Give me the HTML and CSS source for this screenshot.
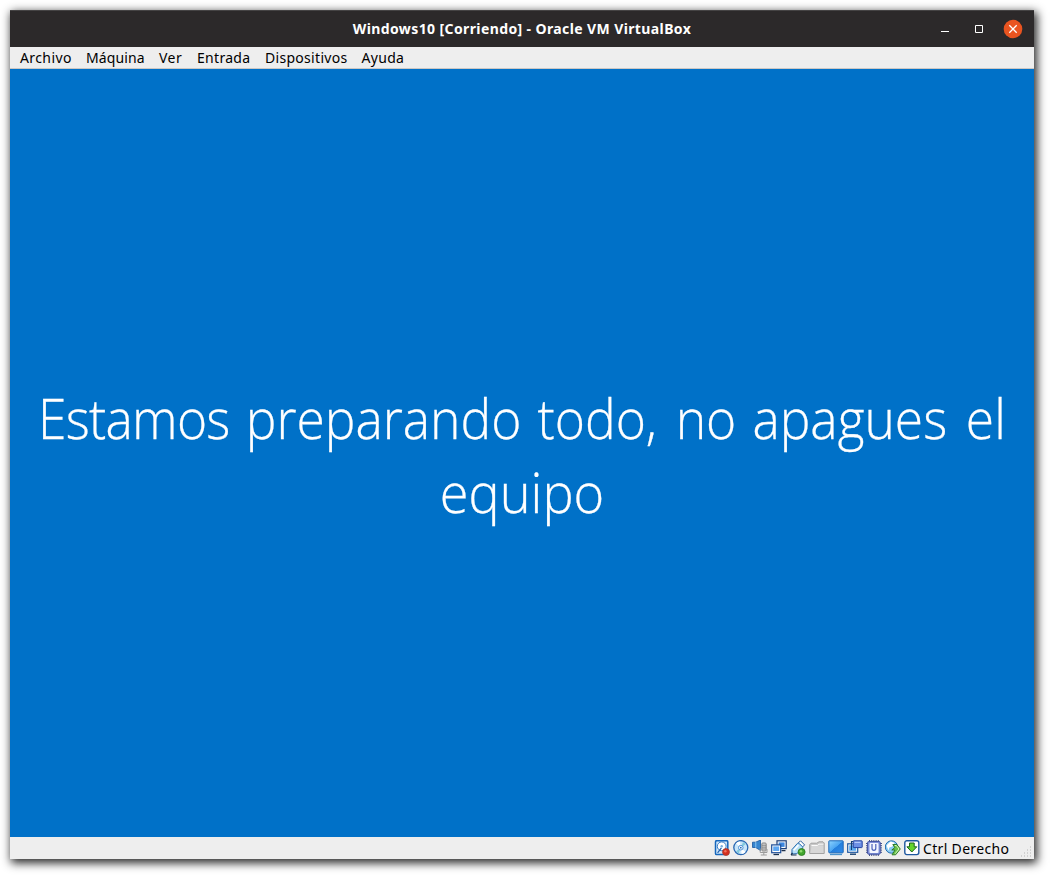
FILE: index.html
```html
<!DOCTYPE html>
<html lang="es">
<head>
<meta charset="utf-8">
<title>Windows10 [Corriendo] - Oracle VM VirtualBox</title>
<link rel="stylesheet" href="styles.css">
</head>
<body>
<div class="window">
  <header class="titlebar">
    <h1 class="title">Windows10 [Corriendo] - Oracle VM VirtualBox</h1>
    <div class="controls">
      <svg class="control" viewBox="0 0 20 20"><path d="M6 12.5h8" stroke="#fff"/></svg>
      <svg class="control" viewBox="0 0 20 20"><path d="M6.5 6.5h7v7h-7z" fill="none" stroke="#fff"/></svg>
      <svg class="control" viewBox="0 0 20 20"><circle cx="10" cy="10" r="9.3" fill="#e95420"/><path d="M6.3 6.3l7.4 7.4M13.7 6.3l-7.4 7.4" stroke="#fff" stroke-width="1.3"/></svg>
    </div>
  </header>
  <nav class="menubar">
    <span class="m-archivo">Archivo</span><span class="m-maquina">Máquina</span><span class="m-ver">Ver</span><span class="m-entrada">Entrada</span><span class="m-dispositivos">Dispositivos</span><span class="m-ayuda">Ayuda</span>
  </nav>
  <main class="screen">
    <p class="message"><span class="line-one"><span class="tight">Estamos</span> preparando todo, <span class="loose">no</span> apagues <span class="loose">el</span></span><span class="line-two">equipo</span></p>
  </main>
  <footer class="statusbar">
    <div class="icons">
      <!-- hard disk -->
      <svg viewBox="0 0 16 16"><rect x="1.5" y=".7" width="12.3" height="13.9" rx="1.2" fill="#cfe6fa" stroke="#1667bd" stroke-width="1.5"/><circle cx="7.7" cy="6.3" r="4.4" fill="#fff" stroke="#3a7cc4"/><circle cx="7.7" cy="6.3" r="1.2" fill="#77aee0"/><path d="M3.6 12.8l3.8-5" stroke="#1f5fae" stroke-width="1.2"/><circle cx="12" cy="12" r="3.5" fill="#d42f1f" stroke="#a0392d" stroke-width=".7"/><circle cx="11.4" cy="11.2" r="1.2" fill="#f0705c"/></svg>
      <!-- optical disc -->
      <svg viewBox="0 0 16 16"><circle cx="7.8" cy="7.6" r="7" fill="#c9e6fa" stroke="#2766b2" stroke-width="1.3"/><path d="M7.8 7.8L3.1 3.5A6.3 6.3 0 0 1 7 1.6zM7.8 7.8l4.8 4.1a6.3 6.3 0 0 1-4 2.1z" fill="#fff"/><path d="M8 7.8L10 2l2.8 2zM7.6 7.8L5.8 13.5 3 11.5z" fill="#81c9dc"/><circle cx="7.8" cy="7.7" r="2.3" fill="#fff" stroke="#4e91d6"/><circle cx="7.8" cy="7.7" r=".9" fill="#246ab8"/></svg>
      <!-- audio -->
      <svg viewBox="0 0 16 16"><path d="M.5 2.2h3.2L8.5 0v10.5L3.7 7.5H.5z" fill="#3685cf" stroke="#18579f" stroke-width=".8"/><path d="M3.8 2v5.7" stroke="#8bc5f2"/><rect x="9.8" y="3" width="4.4" height="8" rx="1" fill="#d0d0d0" stroke="#858585"/><path d="M10 5.3h4M10 7.2h4M10 9h4" stroke="#777" stroke-width=".7"/><path d="M8.2 8.5v4H15V9M11.8 12.5V15M8.8 15h6" fill="none" stroke="#9b9b9b"/></svg>
      <!-- network -->
      <svg viewBox="0 0 16 16"><rect x="6" y=".8" width="9.2" height="7.8" fill="#fff" stroke="#1d3e78" stroke-width="1.2"/><path d="M7.6 2.4h6v4.5h-6z" fill="#3d86de"/><path d="M10.5 10.6h4" stroke="#1d2e48" stroke-width="1.3"/><rect x=".7" y="4.9" width="9" height="7.8" fill="#fff" stroke="#1d4e98" stroke-width="1.2"/><path d="M2.2 6.4h6V11h-6z" fill="#5ea7f2"/><path d="M2.5 14.5h5.5" stroke="#17304f" stroke-width="1.3"/></svg>
      <!-- usb -->
      <svg viewBox="0 0 16 16"><path d="M10.5.8l4.1 4.1-2.2 2.2-4.1-4.1z" fill="#fff" stroke="#295f9f"/><path d="M2 9.5L7.3 3.5q1-.9 2 .1l3 3q.8 1 0 2l-5.4 5-5 .4z" fill="#b9e0f8" stroke="#2b6fb0"/><path d="M3.7 10.3l4.7-5" stroke="#fff" stroke-width="1.6"/><path d="M1 14.8l1.5-2M1 15h5.5" stroke="#17314e" stroke-width="1.2"/><circle cx="11.6" cy="12" r="3.5" fill="#42a52e" stroke="#24771b" stroke-width=".8"/><circle cx="11" cy="11.2" r="1.3" fill="#91db70"/></svg>
      <!-- shared folders -->
      <svg viewBox="0 0 16 16"><path d="M.7 13.5V4.5L2 3.2h5.8L10 1.8h4l1.2 1.2v10.5z" fill="#c9c9c9" stroke="#a3a3a3"/><path d="M1.4 13l1.2-7.4h11.8V13z" fill="#d7d7d7"/><path d="M2.5 5.5h6L10 4.2h4.5" fill="none" stroke="#fafafa"/></svg>
      <!-- display -->
      <svg viewBox="0 0 16 16"><defs><linearGradient id="display" x1="0" y1="0" x2="1" y2="1"><stop stop-color="#8fd5ff"/><stop offset=".5" stop-color="#4aa5f2"/><stop offset=".52" stop-color="#247fdc"/><stop offset="1" stop-color="#308bea"/></linearGradient></defs><rect x=".8" y=".8" width="14.4" height="12" rx=".6" fill="url(#display)" stroke="#1f68b8"/><path d="M2 14.4h12" stroke="#4c93cc" stroke-width="1.5"/></svg>
      <!-- recording -->
      <svg viewBox="0 0 16 16"><rect x=".7" y="3.8" width="10" height="8.5" fill="#fff" stroke="#1e579f" stroke-width="1.2"/><path d="M2.2 5.3h7v5.5h-7z" fill="#5cacf2"/><path d="M3 14.2h6" stroke="#153f70" stroke-width="1.4"/><path d="M4.5 1v9M4.5 1.5h2" stroke="#153f70" stroke-width="1.1"/><rect x="6.2" y=".8" width="9" height="6.8" rx=".6" fill="#6d90e5" stroke="#2443a0"/><path d="M7.5 2.3h6" stroke="#c6d8ff"/></svg>
      <!-- processor -->
      <svg viewBox="0 0 16 16"><path d="M3.5 0v16M5.7 0v16M7.9 0v16M10.1 0v16M12.3 0v16M0 3.5h16M0 5.7h16M0 7.9h16M0 10.1h16M0 12.3h16" stroke="#303e77" stroke-width=".9"/><rect x="1.6" y="1.6" width="12.6" height="12.6" rx="1" fill="#8798df" stroke="#3f50a1"/><rect x="3.5" y="3" width="9" height="10" rx="1" fill="#f3f6ff"/><path d="M6 4v4.3q0 2 1.9 2t1.9-2V4" fill="none" stroke="#4b62ba" stroke-width="1.2"/></svg>
      <!-- mouse integration -->
      <svg viewBox="0 0 16 16"><circle cx="6.5" cy="7" r="6.2" fill="#8bccf4" stroke="#226baf"/><path d="M1.5 5.5l4-4 4 1.2-2.2 3.8-3 1-.8 3z" fill="#fff"/><path d="M7.8 4.5h4l3.5 4.5-4.7 5.8H7l3-4.8H6.8l3-2.5z" fill="#69c14a" stroke="#26761f" stroke-width=".9" stroke-linejoin="round"/><path d="M9.8 5.5h1.5L14 9l-3.8 4.7" fill="none" stroke="#d5f8bf"/></svg>
      <!-- host key -->
      <svg viewBox="0 0 16 16"><rect x=".8" y=".8" width="14" height="13.8" rx="2" fill="#fff" stroke="#1e579f" stroke-width="1.4"/><path d="M5.5 3h4.7v3.8h2.6L7.8 12 2.9 6.8h2.6z" fill="#65d42c" stroke="#1d661b"/></svg>
    </div>
    <span class="host-key">Ctrl Derecho</span>
    <svg class="grip" viewBox="0 0 12 12"><path d="M9 1h1M6 4h1M9 4h1M3 7h1M6 7h1M9 7h1M0 10h1M3 10h1M6 10h1M9 10h1" stroke="#b4b4b4"/></svg>
  </footer>
</div>
</body>
</html>
```
FILE: styles.css
```css
* { box-sizing: border-box; }
body {
  margin: 0;
  width: 1050px;
  height: 875px;
  padding: 10px 16px 16px 10px;
  overflow: hidden;
  background: #fff;
  font-family: "Noto Sans", "Open Sans", sans-serif;
}
.window {
  display: flex;
  flex-direction: column;
  width: 1024px;
  height: 849px;
  background: #eee;
  box-shadow: 2px 3px 9px 1px rgba(0, 0, 0, .85);
}
.titlebar {
  display: grid;
  grid-template-columns: 1fr auto 1fr;
  align-items: center;
  height: 37px;
  background: #2c292a;
  border-top: 1px solid #454344;
}
.title {
  grid-column: 2;
  margin: 0;
  color: #fff;
  font-size: 14px;
  font-weight: 700;
  line-height: 20px;
  letter-spacing: .39px;
  white-space: nowrap;
}
.controls {
  display: flex;
  justify-content: flex-end;
  gap: 14px;
  padding-right: 11px;
}
.control { width: 20px; height: 20px; }
.menubar {
  display: flex;
  align-items: center;
  height: 22px;
  padding-left: 10px;
  border-bottom: 1px solid #cbc7c4;
  color: #000;
  font-size: 14px;
  line-height: 20px;
  letter-spacing: .3px;
}
.m-archivo { width: 66px; letter-spacing: .4px; }
.m-maquina { width: 73px; letter-spacing: .1px; }
.m-ver { width: 38px; letter-spacing: .5px; }
.m-entrada { width: 68px; }
.m-dispositivos { width: 96.5px; }
.screen {
  display: flex;
  justify-content: center;
  align-items: center;
  height: 768px;
  background: #0071c8;
}
.message {
  display: flex;
  flex-direction: column;
  align-items: center;
  margin: 0;
  padding-top: 1px;
  color: #fff;
  font-family: "Open Sans", "Noto Sans", sans-serif;
  font-size: 56px;
  font-weight: 300;
  line-height: 74px;
  white-space: nowrap;
  -webkit-text-stroke: .3px #fff;
}
.line-one { transform: scaleX(.92); word-spacing: 3px; }
.line-two { transform: scaleX(.935); }
.tight { letter-spacing: -.8px; }
.loose { margin-left: 2.8px; }
.statusbar {
  display: flex;
  height: 22px;
  padding-left: 704px;
}
.icons { display: flex; gap: 3px; padding-top: 3px; }
.icons svg { width: 16px; height: 16px; }
.host-key {
  width: 92px;
  padding-left: 3px;
  color: #000;
  font-size: 14px;
  line-height: 24px;
  letter-spacing: .33px;
  white-space: nowrap;
}
.grip { width: 12px; height: 12px; margin: 9px 0 0 9px; }
```
